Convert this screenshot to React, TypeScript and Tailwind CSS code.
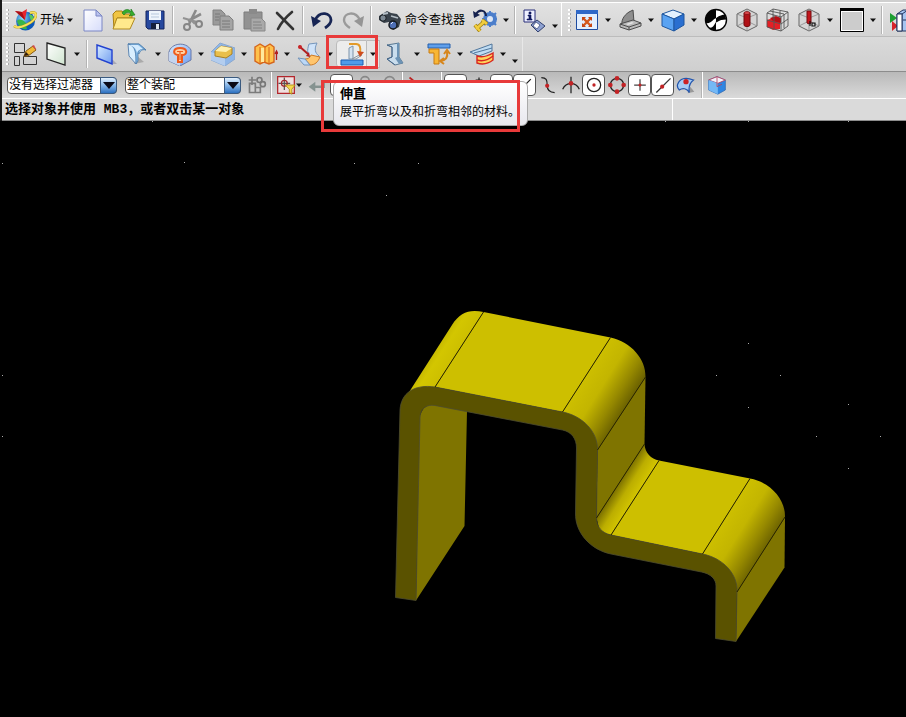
import type { ReactNode } from 'react';

type IconProps = { children: ReactNode; size?: string };

function Icon({ children, size = 'h-6 w-6' }: IconProps) {
  return (
    <svg viewBox="0 0 24 24" className={`${size} shrink-0`} fill="none" aria-hidden="true">
      {children}
    </svg>
  );
}

function CaretGlyph() {
  return (
    <svg viewBox="0 0 6 4" className="h-1 w-1.5" aria-hidden="true">
      <path d="M0 0.5h6L3 4z" fill="#111" />
    </svg>
  );
}

function Caret({ label, low }: { label: string; low?: boolean }) {
  return (
    <button
      type="button"
      aria-label={label}
      className={`flex h-full w-3 shrink-0 justify-center ${low ? 'items-end pb-2' : 'items-center'}`}
    >
      <CaretGlyph />
    </button>
  );
}

function Tool({ label, children }: { label: string; children: ReactNode }) {
  return (
    <button
      type="button"
      aria-label={label}
      className="flex h-full w-[31px] shrink-0 items-center justify-center"
    >
      <Icon>{children}</Icon>
    </button>
  );
}

function Snap({ label, boxed, children }: { label: string; boxed?: boolean; children: ReactNode }) {
  return (
    <button
      type="button"
      aria-label={label}
      className={`flex h-[22px] w-[23px] shrink-0 items-center justify-center rounded-sm ${
        boxed ? 'border border-[#555] bg-white' : ''
      }`}
    >
      <Icon size="h-5 w-5">{children}</Icon>
    </button>
  );
}

function Separator() {
  return (
    <div className="flex h-7 w-1.5 shrink-0 justify-center">
      <div className="w-px bg-[#b4b4b4]" />
      <div className="w-px bg-white" />
    </div>
  );
}

function Grip() {
  return (
    <div className="flex w-[7px] shrink-0 flex-col items-center gap-0.5 pl-1">
      {[0, 1, 2, 3, 4, 5].map((i) => (
        <div key={i} className="h-0.5 w-[3px] border-r border-[#aaa] bg-white" />
      ))}
    </div>
  );
}

function Cube({ children }: { children?: ReactNode }) {
  return (
    <>
      <path d="M2 6 12 1l10 5v12l-10 5-10-5z" fill="#d5d5d5" stroke="#666" />
      <path d="M2 6l10 4 10-4M12 10v13M12 1v9M2 18l10-5 10 5" stroke="#8a8a8a" strokeWidth=".8" />
      {children}
    </>
  );
}

function Filter({ label, value, width }: { label: string; value: string; width: string }) {
  return (
    <div className={`relative h-[17px] shrink-0 ${width}`}>
      <select
        aria-label={label}
        defaultValue={value}
        className="block h-[17px] w-full appearance-none rounded-sm border border-[#555] bg-white pl-px text-xs leading-[15px] text-black"
      >
        <option>{value}</option>
      </select>
      <div className="pointer-events-none absolute inset-y-0 right-0 flex w-[17px] items-center justify-center rounded-r-sm border border-[#3a5a80] bg-linear-to-b from-[#e4f2ff] via-[#86b6e8] to-[#2b70c0]">
        <svg viewBox="0 0 12 7" className="h-[7px] w-3" aria-hidden="true">
          <path d="M0 0h12L6 7z" fill="#0a0a18" />
        </svg>
      </div>
    </div>
  );
}

function StandardToolbar() {
  return (
    <div className="flex h-[34px] items-center overflow-hidden border-b border-[#bcbcbc] bg-linear-to-b from-[#e2e2e2] to-[#d4d4d4]">
      <Grip />
      <button type="button" className="mr-px flex h-full shrink-0 items-center text-xs">
        <span className="flex w-[31px] justify-center">
          <Icon>
            <circle cx="12.500" cy="13" r="9.500" fill="url(#globe)" />
            <path d="M4 13c2-3 6-1 8 1s1 4 2 7c-4 1-8-1-10-8z" fill="#37b54a" />
            <path d="M16 6c4 1 5 3 5 7-3 1-4-2-5-7z" fill="#57c85c" />
            <path d="M1 18c5 4 22-4 22-11 0-3-3-3-6-2" stroke="#b99b1a" strokeWidth="2.600" />
            <path d="M1 18c5 4 22-4 22-11 0-3-3-3-6-2" stroke="#f6e060" strokeWidth="1.800" />
            <path d="M2 3l7 1 5-3-2 11z" fill="#e8262e" />
            <path d="M2 3l7 1 3 8z" fill="#a80f16" />
          </Icon>
        </span>
        <span>开始</span>
        <span className="flex w-3 justify-center">
          <CaretGlyph />
        </span>
      </button>
      <Tool label="新建">
        <path d="M3 2h12l6 6v15H3z" fill="url(#paper)" stroke="#7a86c4" />
        <path d="M15 2v6h6z" fill="#b9c2ee" stroke="#7a86c4" />
      </Tool>
      <Tool label="打开">
        <path d="M1 6l3-3h6l2 3h8v4H5L2 21z" fill="#f0c544" stroke="#a88014" />
        <path d="M5 10h18l-5 11H1z" fill="#ffe98c" stroke="#b08a20" />
        <path d="M10 5c2-4 7-5 9-1V1l4 6-6 1 2-2c-2-2-5-2-7 1z" fill="#36ad2e" stroke="#167318" strokeWidth=".6" />
      </Tool>
      <Tool label="保存">
        <path d="M3 3h18v18H5l-2-2z" fill="#27499f" stroke="#14255e" />
        <path d="M6 3h12v9H6z" fill="#eef4fb" />
        <path d="M8 6h8M8 9h8" stroke="#b7c8dd" />
        <path d="M8 15h9v6H8z" fill="#151e3c" />
        <path d="M13 16h3v5h-3z" fill="#dfe6f2" />
      </Tool>
      <Separator />
      <Tool label="剪切">
        <path d="M16 2 9 16M21 6 8 13" stroke="#8a8a8a" strokeWidth="2.600" />
        <path d="M3 10l14 4M11 12l4 4" stroke="#929292" strokeWidth="2" />
        <circle cx="7" cy="19" r="3" stroke="#868686" strokeWidth="2" />
        <circle cx="19" cy="16" r="3" stroke="#868686" strokeWidth="2" />
      </Tool>
      <Tool label="复制">
        <path d="M2 2h8l4 4v11H2z" fill="#9b9b9b" stroke="#828282" />
        <path d="M9 8h9l4 4v10H9z" fill="#a5a5a5" stroke="#7e7e7e" />
        <path d="M11 13h8M11 16h8M11 19h8M4 6h5M4 9h4M4 12h4" stroke="#797979" />
      </Tool>
      <Tool label="粘贴">
        <path d="M2 4h18v17H2z" fill="#929292" stroke="#7d7d7d" />
        <path d="M7 1h8v5H7z" fill="#8a8a8a" />
        <path d="M9 10h10l4 4v9H9z" fill="#a9a9a9" stroke="#888" />
        <path d="M11 14h8M11 17h9M11 20h9" stroke="#828282" />
      </Tool>
      <Tool label="删除">
        <path d="M4 5l16 16M19 4C13 9 8 15 5 21" stroke="#333" strokeWidth="2.600" strokeLinecap="round" />
      </Tool>
      <Separator />
      <Tool label="撤消">
        <path d="M5 12C10 2 21 5 21 12c0 4-3 6-6 8" stroke="#172554" strokeWidth="2.800" />
        <path d="M1 8l2 11 8-6z" fill="#172554" />
      </Tool>
      <Tool label="重做">
        <path d="M19 12C14 2 3 5 3 12c0 4 3 6 6 8" stroke="#9a9a9a" strokeWidth="2.400" />
        <path d="M23 8l-2 11-8-6z" fill="#959595" />
      </Tool>
      <Separator />
      <button type="button" className="mr-1 flex h-full shrink-0 items-center text-xs">
        <span className="flex w-[31px] justify-center">
          <Icon>
            <path d="M1 8l8-5 4 2 6 1 4 5-2 8-6 3-4-8-5 1-5-3z" fill="#39424b" />
            <circle cx="5" cy="10" r="3.200" fill="#7d8994" stroke="#161b20" />
            <circle cx="15" cy="17" r="4" fill="#4d6fb5" stroke="#161b20" strokeWidth="1.500" />
            <path d="M13 8l7 2M5 6l5-1" stroke="#b4bec6" strokeWidth="1.800" />
            <path d="M13 16l2-2" stroke="#dde9ff" />
          </Icon>
        </span>
        <span className="whitespace-nowrap">命令查找器</span>
      </button>
      <Tool label="命令设置">
        <circle cx="17" cy="11" r="5" stroke="#4b7ecb" strokeWidth="4" />
        <path d="M17 3v16M9 11h15M11 5l12 12M23 5 11 17" stroke="#4b7ecb" strokeWidth="2" />
        <circle cx="17" cy="11" r="3" fill="#dbe6f6" />
        <path d="M3 6c4-6 10-3 10 2" stroke="#15224e" strokeWidth="2" />
        <path d="M0 3l1 7 6-3z" fill="#15224e" />
        <path d="M3 21l8-7M9 12l5 4M2 17l5 6" stroke="#9d7c10" strokeWidth="4" />
        <path d="M3 21l8-7M9 12l5 4M2 17l5 6" stroke="#f1cd3e" strokeWidth="2.500" />
      </Tool>
      <Caret label="命令设置选项" />
      <Separator />
      <Tool label="信息">
        <path d="M2 2h11v12H2z" fill="#eef0ff" stroke="#272c78" />
        <path d="M7 4h2v2H7zM6 7h3v4h1v1H5v-1h2V8H6z" fill="#111a60" stroke="#111a60" strokeWidth=".6" />
        <path d="M15 12l8 6-7 6-7-7z" fill="#8fa2d2" stroke="#32406e" />
        <path d="M14 14l4 3-3 4-4-3z" fill="#fff" stroke="#32406e" strokeWidth=".7" />
      </Tool>
      <Caret label="工具条选项" low />
      <div className="mr-0.5 h-full w-px shrink-0 bg-white" />
      <Grip />
      <Tool label="适合窗口">
        <path d="M1.500 2.500h21v19h-21z" fill="#e2efff" stroke="#1d4ba0" />
        <path d="M1 2h22v4H1z" fill="#2f68c8" />
        <path d="M8 10l8 8M16 10l-8 8" stroke="#d4581c" strokeWidth="2.400" />
        <path d="M7 9h4l-4 4zM17 9h-4l4 4zM7 19h4l-4-4zM17 19h-4l4-4z" fill="#c64714" />
      </Tool>
      <Caret label="适合窗口选项" />
      <Tool label="透视">
        <path d="M11 4l4-2 1 12-12 5C3 13 5 8 11 4z" fill="#8e8e8e" stroke="#4c4c4c" />
        <path d="M2 16l13-4 8 3v3l-12 4-9-3z" fill="#b9b9b9" stroke="#4c4c4c" />
        <path d="M2 16l9 3 12-4M11 19v3" stroke="#4c4c4c" />
        <path d="M8 16l6-2 2 1-6 2z" fill="#e4e4e4" />
      </Tool>
      <Caret label="透视选项" />
      <Tool label="带边着色">
        <path d="M1 6l11-4 11 4-10 5z" fill="#e3f1ff" stroke="#1f579f" />
        <path d="M1 6l12 5v12L1 18z" fill="#5aa3f2" stroke="#1f579f" />
        <path d="M23 6l-10 5v12l10-6z" fill="#2a6fd0" stroke="#1f579f" />
      </Tool>
      <Caret label="着色选项" />
      <Tool label="面分析">
        <circle cx="12" cy="12" r="10.500" fill="#fff" stroke="#050505" strokeWidth="1.400" />
        <path d="M12 1.500C5 1.500 0 8 2 15c5 1 6-3 10-5z" fill="#050505" />
        <path d="M5 20c4 0 5-3 7-6v8.500c-3 0-5-1-7-2.500z" fill="#050505" />
        <path d="M12 11c3-3 5-3 9-4M12 14c4-3 6-3 10-3" stroke="#050505" strokeWidth="1.200" />
        <path d="M12 11c3-3 5-3 9-4l1 4c-4 0-6 0-10 3z" fill="#050505" />
      </Tool>
      <Tool label="剖切">
        <Cube>
          <path d="M9 5v12c0 2 6 2 6 0V5z" fill="#b01117" stroke="#730a0e" />
          <ellipse cx="12" cy="5" rx="3" ry="1.500" fill="#dc474b" stroke="#730a0e" strokeWidth=".7" />
        </Cube>
      </Tool>
      <Tool label="剖面工作视图">
        <path d="M1 12l6-2 7 2v9l-7 1-6-3z" fill="#e51f25" />
        <path d="M4 10l6-2 5 2v5l-8-2z" fill="#b50e14" />
        <path d="M1 5l6-4 15 3v14l-7 5-14-4zM1 5l14 4 7-5M15 9v14M1 12l14 4 7-5M8 7v14M7 1v9M4 3l14 3v14M14 3v7" stroke="#555" strokeWidth=".9" />
      </Tool>
      <Tool label="编辑剖面">
        <Cube>
          <path d="M10 3v12c0 1 4 1 4 0V3z" fill="#c3161c" stroke="#730a0e" />
          <path d="M13 13v5M15 15h3v3h-3z" stroke="#111" strokeWidth="1.200" />
        </Cube>
      </Tool>
      <Caret label="剖面选项" />
      <Tool label="背景">
        <path d="M.5.500h23v23H.5z" fill="#fff" stroke="#000" />
        <path d="M2 4h20v18H2z" fill="#ccc" />
        <path d="M0 0h24v3H0z" fill="#000" />
      </Tool>
      <Caret label="背景选项" />
      <Separator />
      <Tool label="移动部件">
        <path d="M1 5l7 5-7 5z" fill="#1d9f32" />
        <path d="M3 13l6 5-6 5z" fill="#d6242a" />
        <path d="M8 6l6-4h10v16l-6 5H8z" fill="#a6c5f1" stroke="#23345f" />
        <path d="M8 6h5l6-4M13 6v17M14 12h10" stroke="#23345f" />
        <path d="M8 6h5v17H8z" fill="#fff" stroke="#23345f" />
      </Tool>
    </div>
  );
}

function UnbendButton() {
  return (
    <div className="relative flex h-full shrink-0 items-center">
      <button
        type="button"
        aria-describedby="unbend-tip"
        aria-label="伸直"
        className="flex h-7 w-[31px] items-center justify-center rounded-l-sm border border-[#bbb] bg-[#ececec]"
      >
        <Icon>
          <path d="M1 18h22v5H1z" fill="#4f9bea" stroke="#1d5cb1" />
          <path d="M9 6l4-2v13H9z" fill="#d5e3f1" stroke="#7d93a9" />
          <path d="M12 17 21 12M12 17l4 0 6-4" stroke="#8d97a1" />
          <path d="M9 2h7c4 0 5 4 4 9" stroke="#e39a2a" strokeWidth="2" />
          <path d="M17 9l3 6 4-5z" fill="#ce4b1d" />
        </Icon>
      </button>
      <div className="flex h-7 border-y border-r border-[#bbb] bg-[#e6e6e6]">
        <Caret label="伸直选项" />
      </div>
      <div className="pointer-events-none absolute -top-0.5 -left-2.5 z-20 h-[34px] w-[52px] border-3 border-[#e83a3a]" />
      <div
        id="unbend-tip"
        role="tooltip"
        className="absolute top-[44px] -left-[3px] z-10 h-[45px] w-[195px] rounded-md border border-[#aaa] bg-linear-to-b from-white to-[#e8e8ee] px-1.5 pt-1 text-black"
      >
        <p className="text-[13px] leading-4 font-bold">伸直</p>
        <p className="text-xs leading-5 whitespace-nowrap">展平折弯以及和折弯相邻的材料。</p>
      </div>
      <div className="pointer-events-none absolute top-[43px] -left-[15px] z-20 h-[52px] w-[199px] border-3 border-[#e83a3a]" />
    </div>
  );
}

function SheetMetalToolbar() {
  return (
    <div className="flex h-[35px] items-center border-b border-[#8c8c8c] bg-linear-to-b from-[#dadada] to-[#cfcfcf]">
      <div className="flex h-full items-center border-r border-[#e8e8e8] pr-px">
        <Grip />
        <Tool label="草图">
          <path d="M1.500 1.500h10v9h-10zM1.500 14.500h5v9h-5zM10.500 14.500h13v8h-13z" stroke="#333" />
          <path d="M11 14l2-5 7-5 3 4-8 6z" fill="#efb834" stroke="#8a5c10" />
          <path d="M11 14l2-4 3 3z" fill="#2d1c12" />
          <path d="M19 4l2-1 2 4v1z" fill="#d3494c" />
        </Tool>
        <Tool label="基准平面">
          <path d="M3 1l18 5v17L3 17z" fill="url(#plane)" stroke="#222" strokeWidth="1.300" />
        </Tool>
        <Caret label="基准选项" />
        <div className="w-px shrink-0" />
        <Separator />
        <Tool label="突出块">
          <path d="M3 17l15 5h5l-4-4z" fill="#a8a8b4" />
          <path d="M3 3l15 5v14L3 16z" fill="url(#steel)" stroke="#2141d0" strokeWidth="1.400" />
        </Tool>
        <Tool label="弯边">
          <path d="M9 22l10-2-7-6z" fill="#aaa" />
          <path d="M3 2h11l7 6c-4-1-6 1-7 4L6 5z" fill="#8fbfe8" stroke="#6990b5" />
          <path d="M3 2c7 1 9 5 8 20L4 14z" fill="#d9efff" stroke="#6087b2" />
          <path d="M3 2h11l7 6c-4-2-7-1-8 3v8l-2 3c0-10 0-18-8-20z" fill="#7db4e3" stroke="#4f7eac" strokeWidth=".8" />
          <path d="M4 3h9l5 4c-3 0-5 1-6 4C11 6 8 4 4 3z" fill="#d3ebff" />
        </Tool>
        <Caret label="弯边选项" />
        <Tool label="凹坑">
          <path d="M1 10C3 1 18-1 23 8v10l-11 6-11-5z" fill="url(#steel)" stroke="#6879a8" />
          <path d="M1 10c4 0 8 1 11 5v9L1 19z" fill="#c5d4ee" />
          <path d="M12 6c-8 0-7 7-2 7v7h4v-7c6 0 6-7-2-7z" fill="#ffd0a4" stroke="#ee5a1c" strokeWidth="2" />
          <path d="M9 9.500h6M12 10v8" stroke="#ee5a1c" strokeWidth="1.200" />
        </Tool>
        <Caret label="凹坑选项" />
        <Tool label="实体冲压">
          <path d="M0 10 9 1l15 5v11l-10 7L0 18z" fill="#8fb6e8" stroke="#8aa8cf" />
          <path d="M0 10l14 5v9L0 18z" fill="#b3cdee" />
          <path d="M4 9l6-5 11 2v6l-6 4-11-2z" fill="#e9bf4b" stroke="#a88025" />
          <path d="M4 9l6-5 11 2-6 4z" fill="#fff0ad" />
        </Tool>
        <Caret label="冲压选项" />
        <Tool label="折弯">
          <path d="M1 5l5-3 5 3 5-3 4 3v15l-5 2-5-2-4 2-5-3z" fill="#ffc14b" stroke="#d5651c" strokeWidth="1.400" />
          <path d="M6 5v16M11 5v16M15 5v16" stroke="#d5651c" />
          <path d="M7 6h3v14H7z" fill="#ffe99e" />
          <path d="M22.500 9v9M21 12l1.500-3 1.500 3" stroke="#b21f20" strokeWidth="1.300" />
        </Tool>
        <Caret label="折弯选项" />
        <Tool label="折边">
          <path d="M12 2l8-1c-3 6-2 10 2 13l-8 3c-4-4-4-9-2-15z" fill="#cfe3f9" stroke="#7495bb" />
          <path d="M8 17c3 0 5-1 6-4l9 2c-2 5-5 8-10 8z" fill="#ffc56d" stroke="#cd7a24" />
          <path d="M1 16l7 1 5 6H7z" fill="#bcd8f7" stroke="#7495bb" />
          <path d="M2 4l9 8" stroke="#b01e20" strokeWidth="2" />
          <path d="M9 14l4 1-1-5z" fill="#b01e20" />
          <circle cx="3" cy="5" r="2" fill="#c82427" />
        </Tool>
        <Caret label="折边选项" />
        <UnbendButton />
        <Tool label="重新折弯">
          <path d="M3 3l12-2v14l4 6-8 2-8-6 5-2V5z" fill="#c9dded" stroke="#597892" />
          <path d="M13 1l2 0v14l4 6-4 1-4-6 2-1z" fill="#6c93b5" />
          <path d="M3 3l5 2v10l-5 2 8 6" stroke="#47678a" />
        </Tool>
        <Caret label="重新折弯选项" />
        <Tool label="调整大小">
          <path d="M1 2h22v4H1z" fill="#5f9feb" stroke="#245fab" />
          <path d="M2 7h10v15H7V11H2z" fill="#f8b634" stroke="#c77b13" />
          <path d="M20 10c1 5-1 8-6 9M17 12l3-4 3 4M17 16l-4 3 4 3" stroke="#d7861c" strokeWidth="2" />
        </Tool>
        <Caret label="调整大小选项" />
        <Tool label="展平图样">
          <path d="M0 10 22 2v7L9 14z" fill="#bfdcf3" stroke="#52779c" />
          <path d="M4 11 22 6" stroke="#52779c" />
          <path d="M7 14c6 2 11 0 16-3v7c-5 4-10 5-16 3z" fill="#ffd35b" stroke="#d8251f" strokeWidth="1.400" />
          <path d="M7 18c6 2 11 0 16-4" stroke="#d8251f" strokeWidth="1.400" />
        </Tool>
        <Caret label="展平图样选项" />
        <Caret label="钣金工具条选项" low />
      </div>
    </div>
  );
}

function SelectionBar() {
  return (
    <div className="flex h-[27px] items-center overflow-hidden border-b border-white bg-linear-to-b from-[#b9b9b9] to-[#dadada] pl-[5px]">
      <Filter label="类型过滤器" value="没有选择过滤器" width="w-[110px]" />
      <div className="w-2 shrink-0" />
      <Filter label="选择范围" value="整个装配" width="w-[116px]" />
      <div className="w-1 shrink-0" />
      <Snap label="链接选择">
        <path d="M6 2v10M2 6h9M3 10h7v11H3zM10 15h6v6h-6z" stroke="#7c7c7c" strokeWidth="2" />
        <circle cx="15" cy="6" r="3" stroke="#777" strokeWidth="2" />
        <circle cx="19" cy="11" r="3" stroke="#777" strokeWidth="2" />
      </Snap>
      <Separator />
      <Snap label="选择过滤">
        <path d="M2 2h20v20H2z" fill="#efdfdf" stroke="#b3252b" strokeWidth="1.500" />
        <path d="M10 3v15M3 10h14" stroke="#555" strokeWidth="1.500" />
        <circle cx="10" cy="10" r="3.500" stroke="#a1262b" strokeWidth="1.500" />
        <path d="M11 12h12l-4 5v6l-3-2v-4z" fill="#f5d94e" stroke="#a88713" />
      </Snap>
      <div className="-ml-1 flex h-full">
        <Caret label="选择过滤选项" />
      </div>
      <Snap label="返回">
        <path d="M20 6v8H8" stroke="#859390" strokeWidth="3" />
        <path d="M2 14l8-6v12z" fill="#859390" />
      </Snap>
      <div className="w-0.5 shrink-0" />
      <Snap label="全选" boxed>
        <path d="M4 14h16M12 8v12" stroke="#555" />
      </Snap>
      <Snap label="查找">
        <circle cx="12" cy="7" r="5" stroke="#888" strokeWidth="2" />
      </Snap>
      <Snap label="显示">
        <circle cx="14" cy="8" r="6" stroke="#888" strokeWidth="2" />
      </Snap>
      <Separator />
      <Snap label="点">
        <path d="M3 3l10 8" stroke="#b22" strokeWidth="2" />
      </Snap>
      <div className="w-2.5 shrink-0" />
      <Separator />
      <Snap label="端点" boxed>
        <path d="M4 20 14 10" stroke="#222" />
      </Snap>
      <Snap label="控制点">
        <path d="M12 3v16M8 6h8" stroke="#222" strokeWidth="1.500" />
      </Snap>
      <Snap label="中点" boxed>
        <path d="M4 20 14 10" stroke="#222" />
      </Snap>
      <Snap label="曲线端点" boxed>
        <path d="M6 18 19 5M9 10l3 3" stroke="#222" strokeWidth="1.500" />
      </Snap>
      <Snap label="样条极点">
        <path d="M4 3c6 0 7 3 7 9s3 9 9 9" stroke="#222" strokeWidth="1.500" />
        <circle cx="11" cy="13" r="2.500" fill="#c22326" />
      </Snap>
      <Snap label="交点">
        <path d="M12 2v20M2 17c4-9 16-9 20 0" stroke="#222" strokeWidth="1.500" />
        <circle cx="12" cy="10" r="2.800" fill="#c22326" />
      </Snap>
      <Snap label="圆心" boxed>
        <circle cx="12" cy="12" r="8" stroke="#222" strokeWidth="1.500" />
        <circle cx="12" cy="12" r="2" fill="#c22326" />
      </Snap>
      <Snap label="象限点">
        <circle cx="12" cy="12" r="8" stroke="#222" strokeWidth="1.500" />
        <circle cx="12" cy="4" r="2.800" fill="#c22326" />
        <circle cx="12" cy="20" r="2.800" fill="#c22326" />
        <circle cx="4" cy="12" r="2.800" fill="#c22326" />
        <circle cx="20" cy="12" r="2.800" fill="#c22326" />
      </Snap>
      <Snap label="现有点" boxed>
        <path d="M12 5v14M5 12h14" stroke="#444" strokeWidth="1.500" />
        <circle cx="12" cy="12" r="1.800" fill="#c22326" />
      </Snap>
      <Snap label="曲线上的点" boxed>
        <path d="M4 21 21 4" stroke="#333" strokeWidth="1.500" />
        <circle cx="11" cy="14" r="2.500" fill="#c22326" />
      </Snap>
      <Snap label="面上的点">
        <path d="M14 22l8-2-5-6z" fill="#999" />
        <path d="M2 11c3-8 11-8 19-5-4 3-6 9-5 15-3-5-8-6-12-3-2-2-3-4-2-7z" fill="#a6ccf5" stroke="#2456ad" strokeWidth="1.500" />
        <circle cx="12" cy="8" r="3.200" fill="#cc2226" />
      </Snap>
      <div className="w-0.5 shrink-0" />
      <Separator />
      <Snap label="工作视图">
        <path d="M2 6l10-4 10 4v12l-9 5-11-5z" fill="#2f86e2" stroke="#3a70b4" />
        <path d="M2 6l10-4 10 4-9 4z" fill="#f2f3fb" stroke="#b7405c" />
        <path d="M2 6l11 4v13L2 18z" fill="#74b8f5" />
        <path d="M12 2v12l6-3" stroke="#b7405c" />
      </Snap>
    </div>
  );
}

function PromptLine() {
  return (
    <div className="flex h-[22px] items-center border-b border-[#8c8c8c] bg-[#dadada] pl-[3px]">
      <p className="flex-1 font-['Liberation_Mono','Noto_Sans_CJK_SC',monospace] text-[13px] font-bold whitespace-nowrap">
        选择对象并使用 MB3，或者双击某一对象
      </p>
      <div className="h-full w-[234px] border-l border-white" />
    </div>
  );
}

const POINTS = [
  [152, 121], [665, 121], [748, 121], [848, 121], [184, 162], [2, 163], [354, 163], [418, 163], [386, 195],
  [748, 343], [716, 375], [780, 375], [2, 375], [848, 404], [748, 407], [2, 436], [816, 436], [880, 436], [848, 468],
];

// Extrusion edges, front corner first
const EDGES = [
  'M435 387 483.500 312',
  'M562.500 412 610.500 337.500',
  'M597.500 450 645.500 377',
  'M596.500 518 644.500 444',
  'M611 535 659 460.500',
  'M702.500 554 750 478.500',
  'M737 592 785 517',
];

function Viewport() {
  return (
    <svg
      viewBox="0 121 906 596"
      role="img"
      aria-label="钣金件"
      className="min-h-0 w-full flex-1 bg-black"
    >
      <defs>
        <linearGradient id="bendLeft" gradientUnits="userSpaceOnUse" x1="407" y1="369" x2="435" y2="387">
          <stop offset="0" stopColor="#ad9f00" />
          <stop offset=".6" stopColor="#d3c600" />
          <stop offset="1" stopColor="#cdbf00" />
        </linearGradient>
        <linearGradient id="bendRight" gradientUnits="userSpaceOnUse" x1="562" y1="412" x2="605" y2="439">
          <stop offset="0" stopColor="#cdbf00" />
          <stop offset=".4" stopColor="#c3b500" />
          <stop offset=".75" stopColor="#958800" />
          <stop offset="1" stopColor="#6e6400" />
        </linearGradient>
        <linearGradient id="bendInner" gradientUnits="userSpaceOnUse" x1="596" y1="518" x2="615" y2="530">
          <stop offset="0" stopColor="#766b00" />
          <stop offset=".5" stopColor="#bcae00" />
          <stop offset="1" stopColor="#d3c500" />
        </linearGradient>
        <linearGradient id="bendEnd" gradientUnits="userSpaceOnUse" x1="702" y1="554" x2="745" y2="581">
          <stop offset="0" stopColor="#cdbf00" />
          <stop offset=".4" stopColor="#c3b500" />
          <stop offset=".75" stopColor="#958800" />
          <stop offset="1" stopColor="#6e6400" />
        </linearGradient>
      </defs>
      {POINTS.map(([x, y]) => (
        <rect key={`${x}-${y}`} x={x} y={y} width="1" height="1" fill="#aaa" />
      ))}
      <path d="M419 420C421 408 428 403 435 405L467 411 464.500 526 416 600.500z" fill="#7f7400" />
      <path d="M404 400 452 325C460 312 470 309 483.500 312L435 387 412 400z" fill="url(#bendLeft)" />
      <path d="M435 387 483.500 312 610.500 337.500 562.500 412z" fill="#cdbf00" />
      <path d="M562.500 412 610.500 337.500C631 342 646 359 645.500 377L597.500 450 585 430z" fill="url(#bendRight)" />
      <path d="M597.500 450 645.500 377 644.500 444 596.500 518z" fill="#7f7400" />
      <path d="M596.500 518 644.500 444C645 453 651 459 659 460.500L611 535 600 532z" fill="url(#bendInner)" />
      <path d="M611 535 659 460.500 750 478.500 702.500 554z" fill="#cdbf00" />
      <path d="M702.500 554 750 478.500C770 482 785.500 499 785 517L737 592 722 570z" fill="url(#bendEnd)" />
      <path d="M737 592 785 517 784.500 567.500 736 641.500z" fill="#7f7400" />
      <path
        d="M395.500 597.500 400 410C401 393 414 384 435 387L562.500 412C583 416 598 432 597.500 450L596.500 518C596.500 527 602 533 611 535L702.500 554C723 558 738 574 737 592L736 641.500 715.500 638.500 716 586C716 579 711 574 701.500 572L611 554C591 550 575 533 575.500 513L576.500 448C576.500 439 572 432 562.500 430L435 405.500C426 404 420 409 420 418L416 600.500z"
        fill="#5a5200"
        stroke="#4e4c30"
        strokeWidth=".8"
      />
      {EDGES.map((d) => (
        <path key={d} d={d} stroke="#292500" strokeWidth="1" />
      ))}
    </svg>
  );
}

function SharedGradients() {
  return (
    <svg className="absolute h-0 w-0" aria-hidden="true">
      <defs>
        <radialGradient id="globe" cx=".35" cy=".35">
          <stop offset="0" stopColor="#8fe0f8" />
          <stop offset="1" stopColor="#0c58b8" />
        </radialGradient>
        <linearGradient id="paper" x1="0" y1="0" x2="1" y2="1">
          <stop offset="0" stopColor="#fff" />
          <stop offset="1" stopColor="#d6dcfa" />
        </linearGradient>
        <linearGradient id="plane" x1="0" y1="0" x2="1" y2="1">
          <stop offset="0" stopColor="#fff" />
          <stop offset="1" stopColor="#cfe4cf" />
        </linearGradient>
        <linearGradient id="steel" x1="0" y1="0" x2="1" y2="1">
          <stop offset="0" stopColor="#d8ecff" />
          <stop offset="1" stopColor="#6f9cf0" />
        </linearGradient>
      </defs>
    </svg>
  );
}

export default function App() {
  return (
    <main className="flex h-screen flex-col overflow-hidden bg-black font-['Liberation_Sans','Noto_Sans_CJK_SC',sans-serif] text-black">
      <SharedGradients />
      <header className="border-l-2 border-[#1a1a1a]">
        <div className="h-[3px] border-b border-white bg-[#cfcfcf]" />
        <StandardToolbar />
        <SheetMetalToolbar />
        <SelectionBar />
        <PromptLine />
      </header>
      <Viewport />
    </main>
  );
}
